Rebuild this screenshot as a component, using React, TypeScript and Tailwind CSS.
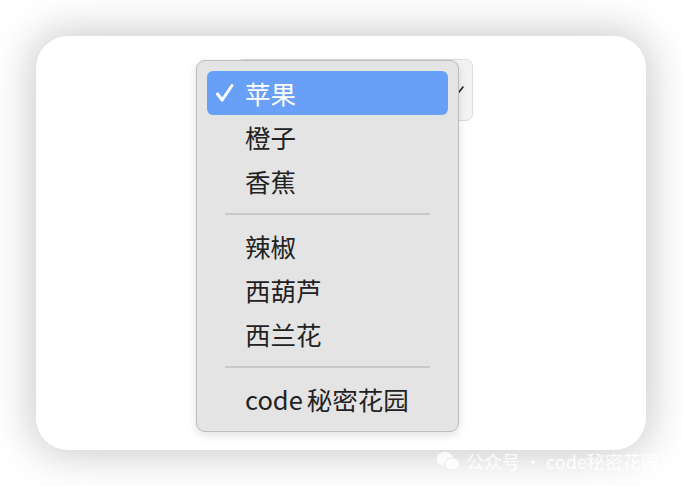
import React from 'react';

// ===========================================
// Popup select menu (macOS style)
// ===========================================

const groups: string[][] = [
  ['苹果', '橙子', '香蕉'],
  ['辣椒', '西葫芦', '西兰花'],
  ['code|秘密花园'],
];

const selected = '苹果';

const font = { fontFamily: '"Noto Sans CJK SC", "Noto Sans", sans-serif' };

const Check = () => (
  <svg width="20" height="20" viewBox="0 0 20 20" fill="none">
    <path d="M2.5 11 L7.2 17 L17 2.5" stroke="white" strokeWidth="3" strokeLinecap="round" strokeLinejoin="round" />
  </svg>
);

const WeChat = () => (
  <svg width="24" height="20" viewBox="0 0 24 20" fill="white" opacity="0.85">
    <ellipse cx="9" cy="8" rx="8.5" ry="7" />
    <ellipse cx="16" cy="13" rx="7.5" ry="6" stroke="#eeeeee" strokeWidth="1" />
  </svg>
);

const Label = ({ text }: { text: string }) => {
  const [latin, cjk] = text.includes('|') ? text.split('|') : ['', text];
  return (
    <span className="text-[25.5px] leading-none">
      {latin}
      {latin && <span className="ml-[4px]">{cjk}</span>}
      {!latin && cjk}
    </span>
  );
};

export default function App() {
  return (
    <div className="w-[682px] h-[486px] bg-white p-[36px] relative overflow-hidden" style={font}>
      <div className="relative w-[610px] h-[414px] bg-white rounded-[32px] shadow-[0_0_40px_6px_rgba(0,0,0,0.2)]">
        {/* select button behind */}
        <div className="absolute left-[200px] top-[23px] w-[237px] h-[62px] rounded-[7px] bg-[#f3f3f3] border border-[#dcdcdc] flex items-center justify-end pr-[8px]">
          <svg width="10" height="8" viewBox="0 0 10 8" fill="none">
            <path d="M1 2 L5 6 L9 1" stroke="#222" strokeWidth="1.6" strokeLinecap="round" />
          </svg>
        </div>

        {/* menu */}
        <div className="absolute left-[160px] top-[24px] w-[263px] rounded-[9px] bg-[#e4e4e4] border border-[#bdbdbd] shadow-[0_3px_10px_rgba(0,0,0,0.12)] px-[10px] py-[10px] flex flex-col">
          {groups.map((g, gi) => (
            <div key={gi} className="flex flex-col">
              {gi > 0 && (
                <div className="h-[21px] flex items-center px-[18px]">
                  <div className="h-[2px] w-full bg-[#c9c9c9]" />
                </div>
              )}
              {g.map((item) => {
                const active = item === selected;
                return (
                  <div
                    key={item}
                    className={
                      active
                        ? 'h-[44px] flex items-center rounded-[6px] bg-[#68a0f8] text-white'
                        : 'h-[44px] flex items-center rounded-[6px] text-[#222222]'
                    }
                  >
                    <div className="w-[38px] flex justify-end pr-[10px]">{active && <Check />}</div>
                    <Label text={item} />
                  </div>
                );
              })}
            </div>
          ))}
        </div>
      </div>

      {/* watermark */}
      <div className="absolute left-[436px] top-[451px] flex items-center gap-[6px] text-white/85 text-[18px] leading-none">
        <WeChat />
        <span>公众号 · code秘密花园</span>
      </div>
    </div>
  );
}
